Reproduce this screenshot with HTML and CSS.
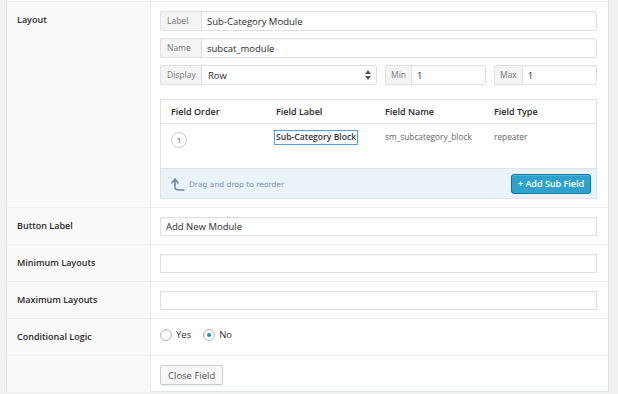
FILE: index.html
```html
<!DOCTYPE html>
<html lang="en">
<head>
	<meta charset="UTF-8" />
	<title>Layout Field</title>
	<link rel="stylesheet" href="styles.css">
</head>
<body>

<div class="panel">

	<!-- Layout -->
	<div class="row">
		<div class="row-label">Layout</div>
		<div class="row-field">
			<div class="input-group">
				<span class="addon">Label</span>
				<input type="text" class="grow" value="Sub-Category Module">
			</div>
			<div class="input-group">
				<span class="addon">Name</span>
				<input type="text" class="grow" value="subcat_module">
			</div>
			<div class="display-line">
				<div class="input-group display">
					<span class="addon">Display</span>
					<div class="select">
						<span>Row</span>
						<svg width="6" height="10" viewBox="0 0 6 10"><path d="M0 4 L3 0 L6 4 Z M0 6 L3 10 L6 6 Z" fill="#555"/></svg>
					</div>
				</div>
				<div class="input-group minmax">
					<span class="addon">Min</span>
					<input type="text" class="grow" value="1">
				</div>
				<div class="input-group minmax">
					<span class="addon">Max</span>
					<input type="text" class="grow" value="1">
				</div>
			</div>

			<div class="subfields">
				<div class="sf-head">
					<div>Field Order</div>
					<div>Field Label</div>
					<div>Field Name</div>
					<div>Field Type</div>
				</div>
				<div class="sf-row">
					<div><span class="order">1</span></div>
					<div><span class="sf-label">Sub-Category Block</span></div>
					<div>sm_subcategory_block</div>
					<div>repeater</div>
				</div>
				<div class="sf-foot">
					<div class="hint">
						<svg width="14" height="14" viewBox="0 0 14 14"><path d="M4 1 L1 5 M4 1 L7 5 M4 1 L4 9 Q4 12 8 12 L13 12" fill="none" stroke="#6e8aa8" stroke-width="1.6" stroke-linecap="round" stroke-linejoin="round"/></svg>
						<span>Drag and drop to reorder</span>
					</div>
					<button class="btn-primary" type="button">+ Add Sub Field</button>
				</div>
			</div>
		</div>
	</div>

	<div class="row">
		<div class="row-label">Button Label</div>
		<div class="row-field">
			<input type="text" class="full" value="Add New Module">
		</div>
	</div>

	<div class="row">
		<div class="row-label">Minimum Layouts</div>
		<div class="row-field">
			<input type="text" class="full" value="">
		</div>
	</div>

	<div class="row">
		<div class="row-label">Maximum Layouts</div>
		<div class="row-field">
			<input type="text" class="full" value="">
		</div>
	</div>

	<div class="row">
		<div class="row-label">Conditional Logic</div>
		<div class="row-field radios">
			<label class="radio"><span class="dot"></span>Yes</label>
			<label class="radio"><span class="dot checked"></span>No</label>
		</div>
	</div>

	<div class="row">
		<div class="row-label"></div>
		<div class="row-field">
			<button class="btn" type="button">Close Field</button>
		</div>
	</div>

</div>

</body>
</html>
```

FILE: styles.css
```css
* {
	box-sizing: border-box;
}

body {
	margin: 0;
	background-color: #f1f1f1;
	font-family: 'Open Sans', 'Noto Sans', sans-serif;
	font-size: 9.5px;
	color: #333;
}

.panel {
	margin-left: 6px;
	width: 603px;
	height: 392px;
	background-color: #fff;
	border-left: 1px solid #e1e1e1;
	border-right: 1px solid #e1e1e1;
	border-bottom: 1px solid #dde4ea;
	padding-top: 1px;
}

.row {
	display: grid;
	grid-template-columns: 144px minmax(0, 1fr);
	border-top: 1px solid #efefef;
}

.row-label {
	background-color: #f9f9f9;
	border-right: 1px solid #efefef;
	padding: 10px 10px;
	font-weight: 600;
	font-size: 9px;
	line-height: 15px;
	color: #2a2a2a;
}

.row-field {
	padding: 9px 11px 8px 9px;
}

/* 带前缀的输入框 */
.input-group {
	display: flex;
	height: 20px;
	margin-bottom: 7px;
}

.addon {
	background-color: #f4f4f4;
	border: 1px solid #e0e0e0;
	border-right: none;
	border-radius: 3px 0 0 3px;
	color: #777;
	font-size: 8.5px;
	line-height: 18px;
	padding: 0 6px;
	width: 41px;
	flex: none;
}

input {
	font-family: inherit;
	font-size: 9.5px;
	color: #2a2a2a;
	border: 1px solid #e0e0e0;
	box-shadow: inset 0 1px 2px rgba(0, 0, 0, 0.05);
	outline: none;
	padding: 0 5px;
	margin: 0;
	background: #fff;
}

.grow {
	flex: 1;
	width: 0;
	min-width: 0;
	border-radius: 0 3px 3px 0;
}

.display-line {
	display: flex;
	margin-bottom: 14px;
}

.display-line .input-group {
	margin-bottom: 0;
}

.display {
	flex: none;
	width: 217px;
	margin-right: 8px;
}

.select {
	flex: 1;
	display: flex;
	align-items: center;
	justify-content: space-between;
	border: 1px solid #e0e0e0;
	border-radius: 0 3px 3px 0;
	padding: 0 5px 0 6px;
	font-size: 9.5px;
	color: #2a2a2a;
}

.minmax {
	flex: none;
	width: 101px;
	margin-right: 8px;
}

.minmax:last-child {
	margin-right: 0;
	width: 0;
	flex: 1;
}

.minmax .addon {
	width: auto;
	padding: 0 5px;
}

/* 子字段表格 */
.subfields {
	border: 1px solid #e1e1e1;
}

.sf-head,
.sf-row {
	display: grid;
	grid-template-columns: 105px 109px 109px 1fr;
}

.sf-head {
	height: 24px;
	border-bottom: 1px solid #e1e1e1;
	font-weight: 600;
	font-size: 9px;
	line-height: 23px;
	color: #2a2a2a;
}

.sf-head div,
.sf-row div {
	padding-left: 10px;
}

.sf-row {
	height: 44px;
	padding-top: 5px;
	font-size: 8.3px;
	color: #666;
	line-height: 15px;
}

.order {
	display: inline-block;
	width: 16px;
	height: 16px;
	margin-top: 3px;
	border: 1px solid #ccc;
	border-radius: 50%;
	text-align: center;
	line-height: 14px;
	font-size: 8px;
	color: #555;
}

.sf-row div:nth-child(2) {
	padding-left: 8px;
}

.sf-label {
	display: inline-block;
	border: 1px solid #5b9dd9;
	padding: 0 1px;
	font-weight: 600;
	font-size: 8.6px;
	color: #333;
	line-height: 13px;
}

.sf-foot {
	display: flex;
	justify-content: space-between;
	align-items: center;
	height: 30px;
	background-color: #eaf2fa;
	border-top: 1px solid #dbe4ee;
	padding: 0 5px 0 10px;
}

.hint {
	display: flex;
	align-items: center;
	gap: 4px;
	color: #7b93ad;
	font-family: 'DejaVu Sans', sans-serif;
	font-size: 7.6px;
	padding-top: 2px;
}

.btn-primary {
	height: 20px;
	width: 80px;
	padding: 0;
	background-color: #2ea2cc;
	border: 1px solid #0074a2;
	border-radius: 3px;
	box-shadow: inset 0 1px 0 rgba(120, 200, 230, 0.5);
	color: #fff;
	font-family: inherit;
	font-size: 9px;
	font-weight: 600;
	cursor: pointer;
}

.full {
	display: block;
	width: 100%;
	height: 19px;
	border-radius: 0;
}

.radios {
	display: flex;
	align-items: center;
	gap: 12px;
	height: 36px;
	padding-top: 6px;
	padding-bottom: 11px;
}

.radio {
	display: flex;
	align-items: center;
	gap: 4px;
	font-size: 9.5px;
	color: #333;
}

.dot {
	width: 12px;
	height: 12px;
	border: 1px solid #b4b9be;
	border-radius: 50%;
	box-shadow: inset 0 1px 2px rgba(0, 0, 0, 0.1);
	position: relative;
}

.dot.checked::after {
	content: '';
	position: absolute;
	left: 3px;
	top: 3px;
	width: 4px;
	height: 4px;
	border-radius: 50%;
	background-color: #1e8cbe;
}

.btn {
	display: block;
	height: 20px;
	padding: 0 7px;
	background-color: #f7f7f7;
	border: 1px solid #ccc;
	border-radius: 2px;
	box-shadow: 0 1px 0 rgba(0, 0, 0, 0.08);
	color: #555;
	font-family: inherit;
	font-size: 9.5px;
	cursor: pointer;
}
```
